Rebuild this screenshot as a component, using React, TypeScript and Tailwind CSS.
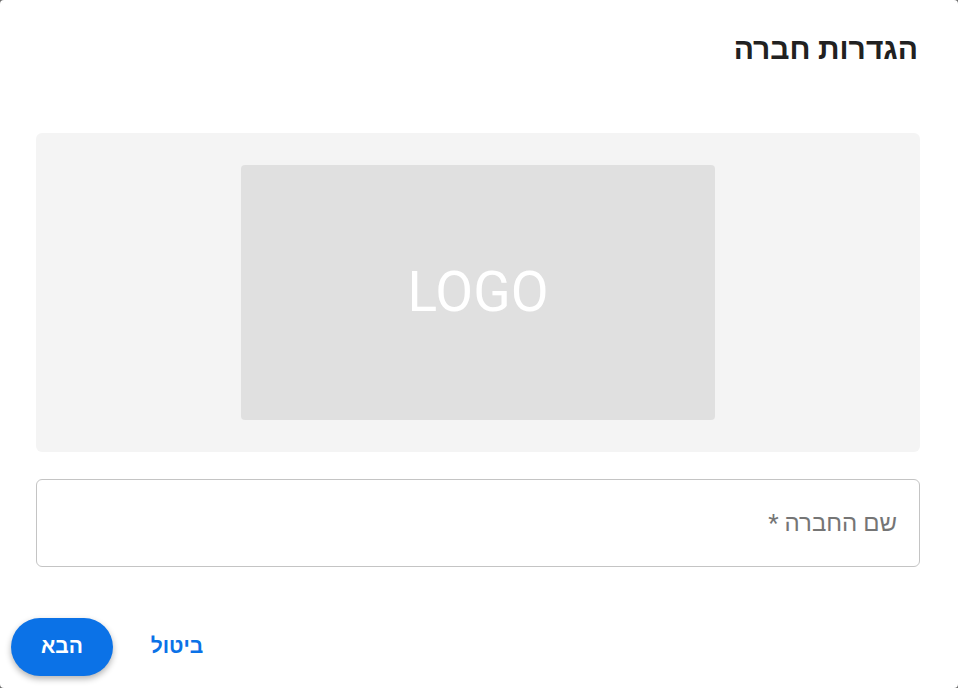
import React from "react";

export default function App() {
  return (
    <div className="h-[688px] w-[958px] bg-[#6b6b6b]">
      <div
        dir="rtl"
        className="flex h-full flex-col rounded-[4px] bg-white font-['Roboto','Noto_Sans',sans-serif]"
      >
        {/* כותרת */}
        <div className="px-[40px] pt-[30px]">
          <h1 className="text-[30px] leading-[38px] font-semibold text-[#212121]">
            הגדרות חברה
          </h1>
        </div>

        <div className="mt-[65px] pr-[38px] pl-[36px]">
          {/* אזור לוגו */}
          <div className="flex h-[319px] items-center justify-center rounded-[6px] bg-[#f4f4f4]">
            <div className="flex h-[255px] w-[474px] items-center justify-center rounded-[4px] bg-[#e0e0e0]">
              <span dir="ltr" className="text-[55px] leading-none text-white">
                LOGO
              </span>
            </div>
          </div>

          {/* שם החברה */}
          <div className="mt-[27px] flex h-[88px] items-center rounded-[6px] border border-[#c4c4c4] px-[22px]">
            <input
              className="w-full bg-transparent text-[24px] text-[#212121] outline-none placeholder:text-[#757575]"
              placeholder="שם החברה *"
            />
          </div>
        </div>

        {/* כפתורים */}
        <div className="mt-auto flex justify-end gap-[19px] px-[11px] pb-[12px]">
          <button className="h-[58px] w-[90px] rounded-full text-[21px] font-semibold text-[#0b72e7]">
            ביטול
          </button>
          <button className="h-[58px] w-[102px] rounded-full bg-[#0b72e7] text-[21px] font-bold text-white shadow-[0_3px_6px_rgba(0,0,0,0.3)]">
            הבא
          </button>
        </div>
      </div>
    </div>
  );
}
